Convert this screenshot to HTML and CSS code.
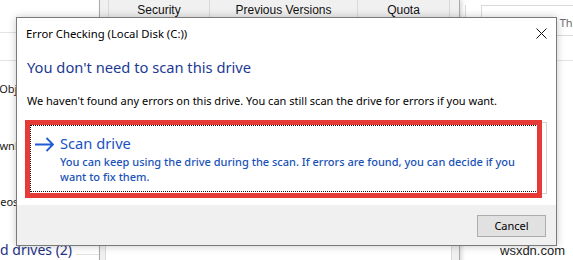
FILE: index.html
```html
<!DOCTYPE html>
<html lang="en">
<head>
<meta charset="utf-8">
<title>Error Checking</title>
<link rel="stylesheet" href="styles.css">
</head>
<body>
<div class="desktop">
  <div class="explorer">
    <div class="ex-toolbar">
      <div class="ex-refresh"></div>
      <div class="ex-search">
        <svg class="ex-search-icon" width="11" height="11" viewBox="0 0 11 11"><circle cx="6.5" cy="4.5" r="3.5" fill="none" stroke="#555" stroke-width="1"/><line x1="4" y1="7" x2="1" y2="10" stroke="#555" stroke-width="1"/></svg>
        <span>Search This PC</span>
      </div>
    </div>
    <div class="ex-address"></div>
    <div class="ex-nav">
      <div class="nav-item nav-3d">3D Objects</div>
      <div class="nav-item nav-dl">Downloads</div>
      <div class="nav-item nav-vid">Videos</div>
      <div class="group-head"><span>Devices and drives (2)</span><i class="group-line"></i></div>
    </div>
  </div>

  <div class="props">
    <div class="tabs">
      <div class="tab tab-sec">Security</div>
      <div class="tab tab-prev">Previous Versions</div>
      <div class="tab tab-quota">Quota</div>
    </div>
    <div class="tab-panel"></div>
  </div>

  <div class="dialog">
    <div class="titlebar">
      <span class="title">Error Checking (Local Disk (C:))</span>
      <svg class="close" width="11" height="11" viewBox="0 0 11 11"><path d="M0.5 0.5 L10.5 10.5 M10.5 0.5 L0.5 10.5" stroke="#111" stroke-width="1" fill="none"/></svg>
    </div>
    <div class="content">
      <div class="main-instruction">You don't need to scan this drive</div>
      <div class="body-text">We haven't found any errors on this drive. You can still scan the drive for errors if you want.</div>
      <div class="cmd-link">
        <svg class="cmd-arrow" width="19" height="21" viewBox="0 0 19 21"><path d="M0 11.5 H17.5 M11.5 5 L18 11.5 L11.5 18" stroke="#1f5bd3" stroke-width="1.8" fill="none"/></svg>
        <div class="cmd-text">
          <div class="cmd-title">Scan drive</div>
          <div class="cmd-note">You can keep using the drive during the scan. If errors are found, you can decide if you want to fix them.</div>
        </div>
        <div class="focus-rect"></div>
        <div class="highlight"></div>
      </div>
    </div>
    <div class="footer">
      <button class="btn">Cancel</button>
    </div>
  </div>

  <div class="watermark">wsxdn.com</div>
</div>
</body>
</html>
```

FILE: styles.css
```css
html, body {
  margin: 0;
  padding: 0;
  width: 573px;
  height: 260px;
  overflow: hidden;
  background: #fff;
  font-family: "Noto Sans", "Liberation Sans", sans-serif;
}

.desktop {
  position: relative;
  width: 573px;
  height: 260px;
  overflow: hidden;
  background: #fff;
}

/* ---------- background explorer window ---------- */
.explorer {
  position: absolute;
  inset: 0;
  display: flex;
  flex-direction: column;
  background: #fff;
}

.ex-toolbar {
  height: 32px;
  border-bottom: 1px solid #e3e3e3;
  display: flex;
  align-items: flex-start;
  padding-left: 465px;
  gap: 15px;
}

.ex-refresh {
  margin-top: 5px;
  width: 17px;
  height: 30px;
  box-sizing: border-box;
  border: 1px solid #d9d9d9;
  border-right: none;
}

.ex-search {
  margin-top: 5px;
  flex: 1;
  height: 31px;
  box-sizing: border-box;
  border: 1px solid #d9d9d9;
  border-right: none;
  display: flex;
  align-items: center;
  gap: 10px;
  padding: 4px 0 0 19px;
  font-size: 11px;
  color: #6d6d6d;
  background: #fff;
  white-space: nowrap;
}

.ex-address {
  height: 30px;
  border-bottom: 1px solid #e3e3e3;
}

.ex-nav {
  width: 99px;
  font-size: 11px;
  color: #1a1a1a;
  white-space: nowrap;
  line-height: 16px;
}

.nav-3d { margin-top: 20px; text-indent: -18px; }
.nav-dl { margin-top: 41px; text-indent: -15px; }
.nav-vid { margin-top: 40px; text-indent: -16px; }

.group-head {
  margin-top: 30px;
  display: flex;
  align-items: center;
  font-size: 14px;
  line-height: 20px;
  color: #1e3287;
  margin-left: -70px;
}
.group-line {
  flex: 1;
  height: 1px;
  background: #e2e2e2;
  margin-left: 4px;
  margin-top: 8px;
}

/* ---------- properties window behind ---------- */
.props {
  position: absolute;
  left: 99px;
  top: 0;
  width: 361px;
  height: 280px;
  box-sizing: border-box;
  background: #f0f0f0;
  border-left: 1px solid #a9a9a9;
  border-right: 1px solid #a9a9a9;
  box-shadow: 2px 0 4px rgba(0,0,0,0.15);
}

.tabs {
  display: flex;
  padding-left: 8px;
  height: 22px;
}
.tab {
  box-sizing: border-box;
  border: 1px solid #d9d9d9;
  border-top: none;
  border-right: none;
  font-family: "Liberation Sans", sans-serif;
  font-size: 12px;
  line-height: 20px;
  text-align: center;
  color: #111;
  background: #f0f0f0;
}
.tab-sec { width: 101px; }
.tab-prev { width: 148px; }
.tab-quota { width: 93px; border-right: 1px solid #d9d9d9; }

.tab-panel {
  margin: 0 7px 0 5px;
  height: 260px;
  background: #fff;
  border: 1px solid #d9d9d9;
}

/* ---------- dialog ---------- */
.dialog {
  position: absolute;
  left: 16px;
  top: 17px;
  width: 541px;
  height: 229px;
  box-sizing: border-box;
  border: 1px solid #7a7a7a;
  background: #fff;
  box-shadow: 0 0 8px rgba(0,0,0,0.22);
  display: flex;
  flex-direction: column;
}

.titlebar {
  height: 30px;
  flex: none;
  display: flex;
  align-items: center;
  justify-content: space-between;
  padding: 0 9px 0 9px;
  font-size: 11.3px;
  color: #000;
}
.title { margin-top: 1px; }
.close { display: block; margin-top: 1px; }

.content {
  flex: 1;
  padding: 9px 9px 0 10px;
}

.main-instruction {
  font-size: 14.7px;
  line-height: 21px;
  color: #1c3a94;
  white-space: nowrap;
}

.body-text {
  margin-top: 15px;
  font-size: 11px;
  line-height: 16px;
  color: #000;
  white-space: nowrap;
}

.cmd-link {
  position: relative;
  margin-top: 13px;
  height: 72px;
  box-sizing: border-box;
  border: 1px solid #d4d4d4;
  display: flex;
  align-items: flex-start;
  gap: 6px;
  padding: 10px 0 0 7px;
}

.cmd-arrow { display: block; flex: none; }

.cmd-text { width: 470px; }

.cmd-title {
  font-size: 14.7px;
  line-height: 21px;
  color: #1a52c2;
}

.cmd-note {
  font-size: 11px;
  line-height: 15px;
  color: #1a52b8;
  font-weight: 500;
}

.focus-rect {
  position: absolute;
  left: 2px;
  top: 2px;
  right: 8px;
  bottom: 1px;
  border: 1px dotted #111;
  pointer-events: none;
}

.highlight {
  position: absolute;
  left: -3px;
  top: -3px;
  right: 4px;
  bottom: -5px;
  border: 5px solid #e53a35;
  pointer-events: none;
}

.footer {
  flex: none;
  height: 40px;
  background: #f0f0f0;
  display: flex;
  justify-content: flex-end;
  align-items: flex-start;
  padding: 10px 10px 0 0;
  box-sizing: border-box;
}

.btn {
  width: 69px;
  height: 22px;
  box-sizing: border-box;
  border: 1px solid #adadad;
  background: #e1e1e1;
  font-family: "Noto Sans", "Liberation Sans", sans-serif;
  font-size: 11px;
  line-height: 18px;
  color: #000;
  padding: 0;
}

.watermark {
  position: absolute;
  left: 500px;
  top: 243px;
  font-family: "Liberation Sans", sans-serif;
  font-size: 13px;
  line-height: 16px;
  color: #222;
}
```
